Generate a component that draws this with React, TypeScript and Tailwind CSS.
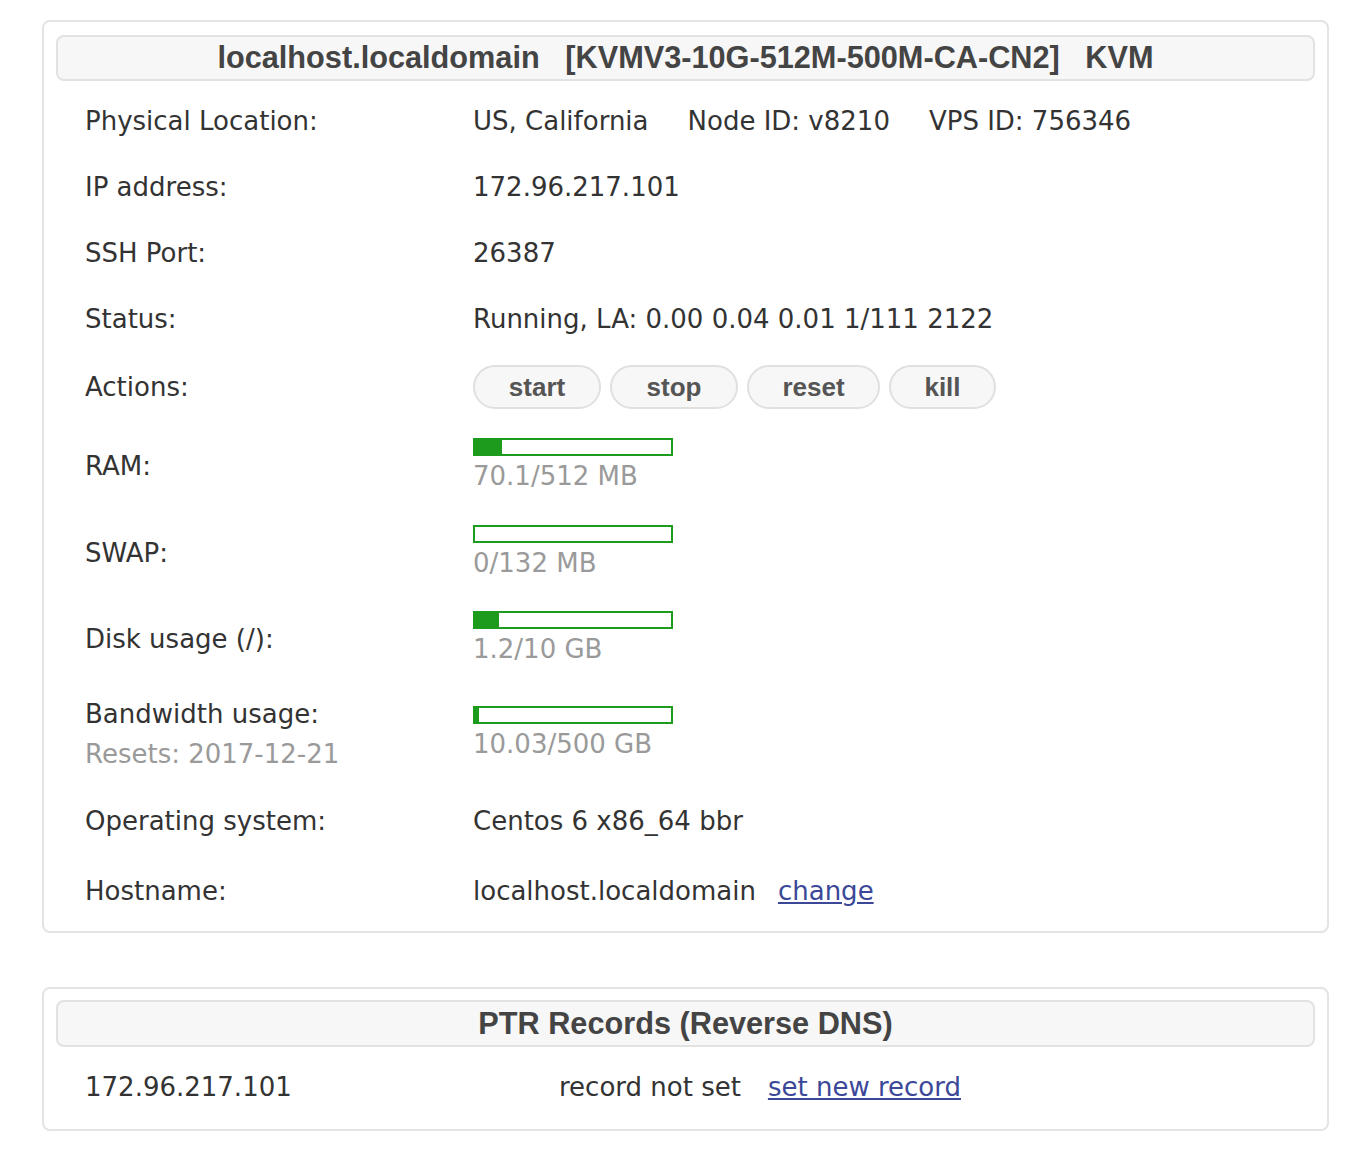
import React from "react";

const body = { fontFamily: '"DejaVu Sans", Verdana, sans-serif' };
const head = { fontFamily: '"Liberation Sans", Arial, Helvetica, sans-serif' };

function Bar({ pct, label }: { pct: number; label: string }) {
  return (
    <div className="flex flex-col pt-[2px]">
      <div className="h-[18px] w-[200px] border-2 border-[#1c9b1c] bg-white">
        <div className="h-full bg-[#1c9b1c]" style={{ width: `${pct}%` }} />
      </div>
      <div className="leading-[40px] text-[#9a9a9a]">{label}</div>
    </div>
  );
}

function Row({ label, h, children }: { label: React.ReactNode; h: string; children: React.ReactNode }) {
  return (
    <div className={`flex items-center ${h}`}>
      <div className="w-[388px] shrink-0">{label}</div>
      <div className="flex items-center">{children}</div>
    </div>
  );
}

function Btn({ children, w }: { children: React.ReactNode; w: string }) {
  return (
    <button
      className={`${w} h-[44px] rounded-full border-2 border-[#e0e0e0] bg-[#f7f7f7] text-[26px] font-bold text-[#555]`}
      style={head}
    >
      {children}
    </button>
  );
}

function Header({ children, h }: { children: React.ReactNode; h: string }) {
  return (
    <div
      className={`flex ${h} items-center justify-center rounded-[8px] border-2 border-[#e2e2e2] bg-[#f7f7f7] pt-[1px] text-[30.7px] font-bold text-[#444]`}
      style={head}
    >
      {children}
    </div>
  );
}

export default function App() {
  return (
    <div className="min-h-[1156px] bg-white pl-[42px] pt-[20px] text-[26px] text-[#333]" style={body}>
      {/* server info */}
      <div className="w-[1287px] rounded-[8px] border-2 border-[#e4e4e4] px-[12px] pb-[5px] pt-[13px]">
        <Header h="h-[46px]">
          localhost.localdomain&nbsp;&nbsp;&nbsp;[KVMV3-10G-512M-500M-CA-CN2]&nbsp;&nbsp;&nbsp;KVM
        </Header>
        <div className="mt-[7px] pl-[29px]">
          <Row label="Physical Location:" h="h-[66px]">
            <span>US, California</span>
            <span className="ml-[39px]">Node ID: v8210</span>
            <span className="ml-[39px]">VPS ID: 756346</span>
          </Row>
          <Row label="IP address:" h="h-[66px]">172.96.217.101</Row>
          <Row label="SSH Port:" h="h-[66px]">26387</Row>
          <Row label="Status:" h="h-[66px]">Running, LA: 0.00 0.04 0.01 1/111 2122</Row>
          <Row label="Actions:" h="h-[70px]">
            <div className="flex gap-[9px]">
              <Btn w="w-[128px]">start</Btn>
              <Btn w="w-[128px]">stop</Btn>
              <Btn w="w-[133px]">reset</Btn>
              <Btn w="w-[107px]">kill</Btn>
            </div>
          </Row>
          <Row label="RAM:" h="h-[88px]">
            <Bar pct={13.7} label="70.1/512 MB" />
          </Row>
          <Row label="SWAP:" h="h-[86px]">
            <Bar pct={0} label="0/132 MB" />
          </Row>
          <Row label="Disk usage (/):" h="h-[86px]">
            <Bar pct={12} label="1.2/10 GB" />
          </Row>
          <Row
            label={
              <div className="leading-[40px]">
                <div>Bandwidth usage:</div>
                <div className="text-[#9a9a9a]">Resets: 2017-12-21</div>
              </div>
            }
            h="h-[104px]"
          >
            <Bar pct={2} label="10.03/500 GB" />
          </Row>
          <Row label="Operating system:" h="h-[70px]">Centos 6 x86_64 bbr</Row>
          <Row label="Hostname:" h="h-[70px]">
            <span>localhost.localdomain</span>
            <a href="#" className="ml-[22px] text-[#3b4898] underline">
              change
            </a>
          </Row>
        </div>
      </div>

      {/* reverse dns */}
      <div className="mt-[54px] w-[1287px] rounded-[8px] border-2 border-[#e4e4e4] px-[12px] pb-[2px] pt-[11px]">
        <Header h="h-[47px]">PTR Records (Reverse DNS)</Header>
        <div className="flex h-[80px] items-center pl-[29px]">
          <span className="w-[474px] shrink-0">172.96.217.101</span>
          <span>record not set</span>
          <a href="#" className="ml-[27px] text-[#3b4898] underline">
            set new record
          </a>
        </div>
      </div>
    </div>
  );
}
